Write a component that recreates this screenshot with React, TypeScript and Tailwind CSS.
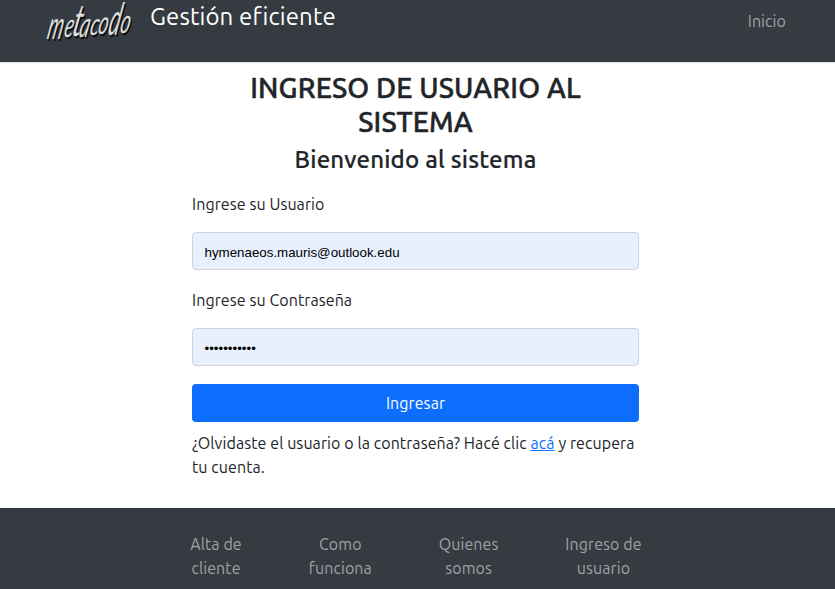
import React from "react";

function Logo() {
  const letters: [string, number, number, number, number, number][] = [
    ["m", 1, 39, 26, 0.75, 1.5],
    ["e", 18, 37, 26, 0.72, 1.3],
    ["t", 26, 36, 32, 0.8, 1.4],
    ["a", 33, 37, 26, 0.75, 1.35],
    ["c", 44, 35, 25, 0.75, 1.25],
    ["o", 52, 34, 25, 0.75, 1.3],
    ["d", 62, 35, 31, 0.68, 1.45],
    ["o", 74, 33, 25, 0.75, 1.35],
  ];
  const word = (fill: string, dx: number, dy: number) => (
    <g fill={fill} transform={`translate(${dx} ${dy})`}>
      {letters.map(([c, x, y, s, w, h], i) => (
        <text key={i} fontSize={s} transform={`translate(${x} ${y}) skewX(-12) scale(${w} ${h})`}>
          {c}
        </text>
      ))}
    </g>
  );
  return (
    <svg width="90" height="50" viewBox="0 0 90 50" className="overflow-visible font-['Lato'] font-normal italic" role="img" aria-label="metacodo">
      {word("#0d0f12", 1.2, 1.5)}
      {word("#dededa", 0, 0)}
    </svg>
  );
}

const links: { a: string; b: string; box: string }[] = [
  { a: "Alta de", b: "cliente", box: "w-[52px]" },
  { a: "Como", b: "funciona", box: "w-[64px]" },
  { a: "Quienes", b: "somos", box: "w-[60px]" },
  { a: "Ingreso de", b: "usuario", box: "w-[77px]" },
];

export default function App() {
  return (
    <div className="flex h-[589px] w-full flex-col overflow-hidden bg-white font-['Ubuntu','Noto_Sans',sans-serif] text-[16px] leading-6 tracking-[0.08px] text-[#212529]">
      <header className="flex h-[63px] shrink-0 items-start border-b border-[#dee2e6] bg-[#363a41] pl-[45px] pr-[49px]">
        <Logo />
        <span className="ml-[15px] mt-[-1px] whitespace-nowrap text-[24px] leading-9 tracking-[0.12px] text-white">Gestión eficiente</span>
        <a className="ml-auto mt-[9px] text-[#9fa2a5]">Inicio</a>
      </header>
      <main className="ml-[192px] flex h-[445px] w-[447px] shrink-0 flex-col">
        <h1 className="mt-[8px] text-center text-[28px] font-medium leading-[34px] tracking-[0.15px] [-webkit-text-stroke:0.5px_#212529]">
          INGRESO DE USUARIO AL
          <br />
          SISTEMA
        </h1>
        <h2 className="mt-[6px] text-center text-[24px] font-medium leading-[29px] tracking-[0.2px] [-webkit-text-stroke:0.2px_#212529]">Bienvenido al sistema</h2>
        <label className="mt-[18px]">Ingrese su Usuario</label>
        <div className="mt-4 flex h-[38px] items-center rounded border border-[#ced4da] bg-[#e8f0fe] px-[11.5px] pt-[3px] font-['Liberation_Sans',sans-serif] text-[13.333px] tracking-normal text-black">
          hymenaeos.mauris@outlook.edu
        </div>
        <label className="mt-[18px]">Ingrese su Contraseña</label>
        <div className="mt-4 flex h-[38px] items-center rounded border border-[#ced4da] bg-[#e8f0fe] px-[11.5px] pt-[3px] font-['Liberation_Sans',sans-serif] text-[13.333px] tracking-normal text-black">
          •••••••••••
        </div>
        <button className="mt-[18px] h-[38px] rounded bg-[#0d6efd] text-white">Ingresar</button>
        <p className="mt-[9px] whitespace-nowrap">
          ¿Olvidaste el usuario o la contraseña? Hacé clic <a className="text-[#0d6efd] underline">acá</a> y recupera
          <br />
          tu cuenta.
        </p>
      </main>
      <footer className="flex flex-1 justify-between bg-[#363a41] pl-[190px] pr-[193px] pt-6 text-[#9fa2a5]">
        {links.map((l) => (
          <a key={l.a} className={`${l.box} whitespace-nowrap text-center`}>
            {l.a}
            <br />
            {l.b}
          </a>
        ))}
      </footer>
    </div>
  );
}
